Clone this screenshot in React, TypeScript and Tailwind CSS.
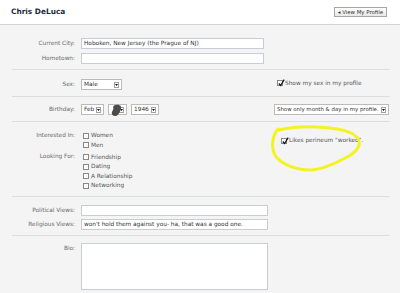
import React from 'react'

const font = { fontFamily: '"DejaVu Sans", "Liberation Sans", sans-serif' }

function Label({ children }: { children: React.ReactNode }) {
  return (
    <div className="w-[64px] shrink-0 text-right pr-[1px] text-[5.8px] leading-[11px] text-[#6b6b6b]">
      {children}
    </div>
  )
}

function TextBox({ value, w }: { value?: string; w: string }) {
  return (
    <div
      className={`${w} h-[11px] bg-white border border-[#c8ccd6] px-[2px] text-[5.8px] leading-[9px] text-[#333] whitespace-nowrap overflow-hidden`}
    >
      {value}
    </div>
  )
}

function Arrow() {
  return (
    <div className="w-[5px] h-[6px] shrink-0 border border-[#a0a0a0] bg-white flex items-center justify-center">
      <svg width="3" height="2" viewBox="0 0 3 2">
        <path d="M0 0 L3 0 L1.5 2 Z" fill="#111" />
      </svg>
    </div>
  )
}

function Select({
  value,
  w,
  size = 'text-[5.8px]',
  children,
}: {
  value?: string
  w: string
  size?: string
  children?: React.ReactNode
}) {
  return (
    <div className={`${w} ${size} relative h-[11px] bg-white border border-[#bbb] pl-[2px] pr-[2px] flex items-center justify-between gap-[1px] text-[#333]`}>
      <span className="whitespace-nowrap">{value}</span>
      {children}
      <Arrow />
    </div>
  )
}

function Check({ checked }: { checked?: boolean }) {
  return (
    <div className="w-[6px] h-[6px] bg-white border border-[#888] relative shrink-0">
      {checked && (
        <svg className="absolute -top-[2px] left-0" width="7" height="8" viewBox="0 0 7 8">
          <path d="M0.8 4.5 L2.6 6.6 L6.2 0.6" stroke="#111" strokeWidth="1.2" fill="none" />
        </svg>
      )}
    </div>
  )
}

function CheckRow({ label, checked }: { label: string; checked?: boolean }) {
  return (
    <div className="flex items-center gap-[2px] h-[9.6px] text-[5.8px] text-[#555]">
      <Check checked={checked} />
      <span className="whitespace-nowrap">{label}</span>
    </div>
  )
}

export default function App() {
  return (
    <div className="relative w-[400px] h-[293px] overflow-hidden bg-[#f4f4f4]" style={font}>
      {/* Header */}
      <div className="h-[25px] bg-white border-b border-[#d4d4d4] flex items-center justify-between pl-[11px] pr-[13px]">
        <div className="text-[7.4px] font-bold text-[#1f2a3c]">Chris DeLuca</div>
        <div className="h-[10px] px-[3px] border border-[#a6a6a6] bg-gradient-to-b from-white to-[#e8e8e8] flex items-center text-[5.4px] text-[#333]">
          ◂ View My Profile
        </div>
      </div>

      <div className="pl-[12px] pr-[10px]">
        {/* City / hometown */}
        <div className="pt-[13px] pb-[5px] border-b border-[#dedede] flex flex-col gap-[4px]">
          <div className="flex gap-[5px]">
            <Label>Current City:</Label>
            <TextBox w="w-[183px]" value="Hoboken, New Jersey (the Prague of NJ)" />
          </div>
          <div className="flex gap-[5px]">
            <Label>Hometown:</Label>
            <TextBox w="w-[183px]" />
          </div>
        </div>

        {/* Sex */}
        <div className="pt-[9px] pb-[6px] border-b border-[#dedede] flex">
          <div className="flex gap-[5px] w-[262px]">
            <Label>Sex:</Label>
            <Select w="w-[41px]" value="Male" />
          </div>
          <div className="flex items-start gap-[2px] pl-[3px] pt-[1px] text-[5.8px] text-[#555]">
            <Check checked />
            <span className="leading-[7px]">Show my sex in my profile</span>
          </div>
        </div>

        {/* Birthday */}
        <div className="pt-[7px] pb-[6px] border-b border-[#dedede] flex">
          <div className="flex gap-[5px] w-[262px]">
            <Label>Birthday:</Label>
            <div className="flex gap-[4px]">
              <Select w="w-[23px]" value="Feb" />
              <Select w="w-[19px]" value="">
                <svg className="absolute left-[1px] -top-[1px]" width="13" height="13" viewBox="0 0 13 13">
                  <path
                    d="M4 1.5 C6 0.2 9 0.5 10.5 1.8 C11.8 3.5 11 6 9.5 8.5 C8.5 10.5 7 12.2 5 12 C3 11.8 1.5 10.8 1.8 8.8 C2 7 3.5 6 3.3 4.2 C3.1 3 3.2 2 4 1.5 Z"
                    fill="#4f4b49"
                  />
                </svg>
              </Select>
              <Select w="w-[28px]" value="1946" />
            </div>
          </div>
          <Select w="w-[115px]" size="text-[5.4px]" value="Show only month & day in my profile." />
        </div>

        {/* Interested in / Looking for */}
        <div className="pt-[9px] pb-[5px] border-b border-[#dedede] flex">
          <div className="w-[262px] flex flex-col">
            <div className="flex gap-[5px]">
              <div className="w-[64px] shrink-0 text-right pr-[1px] text-[5.8px] leading-[9.6px] text-[#6b6b6b]">Interested In:</div>
              <div className="pl-[2px]">
                <CheckRow label="Women" />
                <CheckRow label="Men" />
              </div>
            </div>
            <div className="flex gap-[5px] mt-[2px]">
              <div className="w-[64px] shrink-0 text-right pr-[1px] text-[5.8px] leading-[9.6px] text-[#6b6b6b]">Looking For:</div>
              <div className="pl-[2px]">
                <CheckRow label="Friendship" />
                <CheckRow label="Dating" />
                <CheckRow label="A Relationship" />
                <CheckRow label="Networking" />
              </div>
            </div>
          </div>
          <div className="pl-[7px] pt-[5px]">
            <CheckRow label='Likes perineum "worked".' checked />
          </div>
        </div>

        {/* Views */}
        <div className="pt-[8px] pb-[5px] border-b border-[#dedede] flex flex-col gap-[3px]">
          <div className="flex gap-[5px]">
            <Label>Political Views:</Label>
            <TextBox w="w-[187px]" />
          </div>
          <div className="flex gap-[5px]">
            <Label>Religious Views:</Label>
            <TextBox w="w-[187px]" value="won't hold them against you- ha, that was a good one." />
          </div>
        </div>

        {/* Bio */}
        <div className="pt-[7px] flex gap-[5px]">
          <div className="w-[64px] shrink-0 text-right pr-[1px] text-[5.8px] leading-[10px] text-[#6b6b6b]">Bio:</div>
          <div className="w-[187px] h-[47px] bg-white border border-[#c8ccd6]" />
        </div>
      </div>

      {/* yellow marker annotation */}
      <svg className="absolute left-0 top-0 pointer-events-none" width="400" height="293" viewBox="0 0 400 293">
        <path
          d="M279 130 C300 125 336 126 351 133 C363 139 362 148 349 156 C338 162 322 170 310 170 C296 170 280 164 275 155 C271 147 272 136 278 129"
          stroke="#f3f322"
          strokeWidth="3"
          fill="none"
          strokeLinecap="round"
        />
      </svg>
    </div>
  )
}
